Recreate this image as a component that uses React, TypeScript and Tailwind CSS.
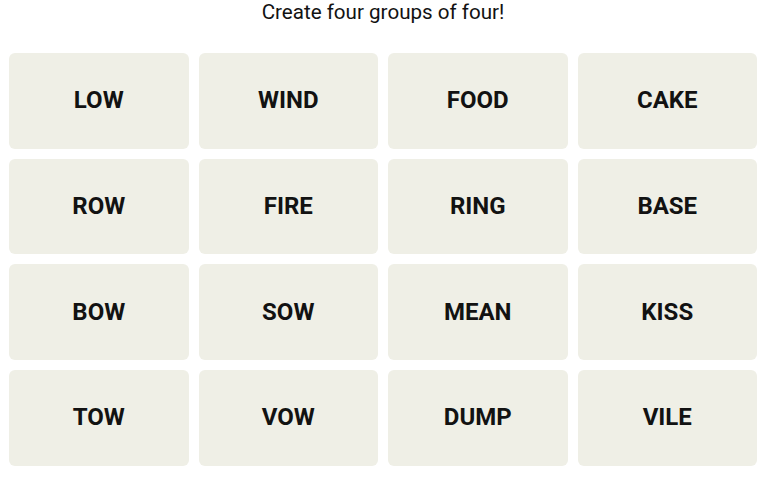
import React from "react";

const words = [
  "LOW", "WIND", "FOOD", "CAKE",
  "ROW", "FIRE", "RING", "BASE",
  "BOW", "SOW", "MEAN", "KISS",
  "TOW", "VOW", "DUMP", "VILE",
];

export default function App() {
  return (
    <div className="w-[766px] h-[477px] bg-white overflow-hidden" style={{ fontFamily: "Roboto, 'Liberation Sans', sans-serif" }}>
      <div className="h-[24px] text-center text-[20.6px] leading-[24px] text-[#121212]">
        Create four groups of four!
      </div>
      <div className="grid grid-cols-4 gap-x-[10px] gap-y-[10px] px-[9px] pt-[29px]">
        {words.map((w) => (
          <div
            key={w}
            className="h-[95.7px] rounded-[6px] bg-[#efefe6] flex items-center justify-center pb-[1px] text-[24px] font-bold text-[#121212]"
          >
            {w}
          </div>
        ))}
      </div>
    </div>
  );
}
